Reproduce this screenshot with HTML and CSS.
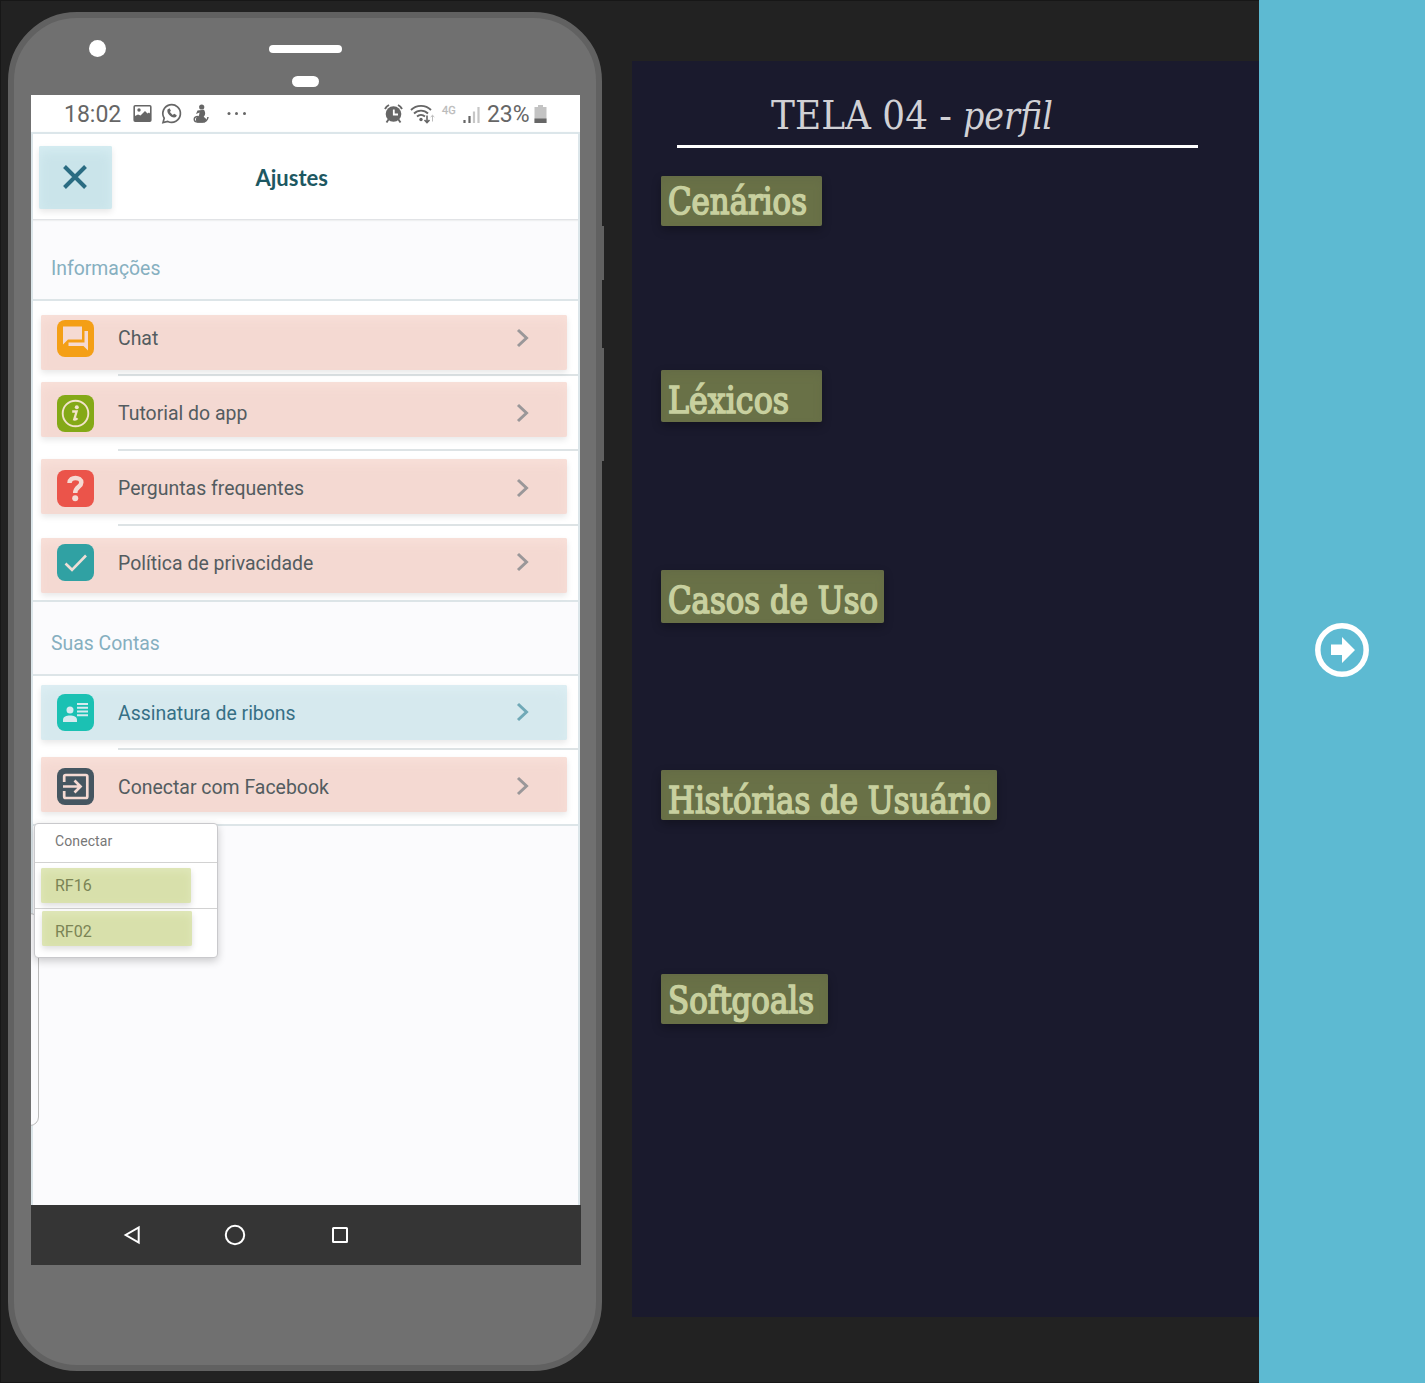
FILE: index.html
```html
<!DOCTYPE html>
<html lang="pt-BR">
<head>
<meta charset="utf-8">
<title>Tela 04 - perfil</title>
<link rel="stylesheet" href="styles.css">
</head>
<body>
<main class="board">
  <section class="phone">
    <i class="camera"></i><i class="speaker"></i><i class="sensor"></i>
    <i class="side-button power"></i><i class="side-button volume"></i>
    <div class="screen">
      <div class="status">
        <span class="clock">18:02</span>
        <svg class="status-left" width="120" height="24" viewBox="0 0 120 24" fill="none" stroke="#666">
          <rect x="1.2" y="3.700" width="16.6" height="15.6" rx="1" stroke-width="1.6"/>
          <path d="M2 19v-5l3-1.500 2.500 1 4.500-4.500 2.500 2.500 1.500-1 2 2V19z" fill="#666" stroke="none"/><circle cx="6" cy="8" r="1.700" fill="#666" stroke="none"/>
          <path d="M30 20.600l1.200-4.400a8.800 8.800 0 1 1 3.600 3.200z" stroke-width="1.700"/>
          <path d="M34.500 7.500c-1.200 4 4.500 9.500 8.500 7.500l.8-1.800-2.600-1.500-1.500 1.300-2.800-2.900 1-1.300-1.300-2.600z" fill="#666" stroke="none"/>
          <g fill="#666" stroke="none"><circle cx="68.700" cy="5" r="2.600"/><path d="M64.500 8.500l6.500-.8q2.500 4-.3 7l2.800 2.500-1.500 3.300h-8q-3-4.500 2-7l.5-3-3.500 1.500z"/></g>
          <path d="M65 14.500c-5 0-5 5.500 0 5.500h4.500c3 0 5-1.500 5.500-5" stroke-width="1.500"/>
          <g fill="#666" stroke="none"><circle cx="96" cy="11.500" r="1.500"/><circle cx="103.500" cy="11.500" r="1.500"/><circle cx="111.500" cy="11.500" r="1.500"/></g>
        </svg>
        <svg class="status-right" width="100" height="24" viewBox="0 0 100 24" fill="none" stroke="#666">
          <circle cx="9.500" cy="12" r="7.800" fill="#666" stroke="none"/><path d="M9.800 7.500v5h4.200" stroke="#fff" stroke-width="1.800"/>
          <path d="M1 7a9 9 0 0 1 4-4M14 3a9 9 0 0 1 4 4M4.500 17.500l-2 3M14.500 17.500l2 3" stroke-width="1.900"/>
          <path d="M27 8a14 14 0 0 1 20 0M30 11.500a10 10 0 0 1 14 0M33 14.500a6 6 0 0 1 8 0" stroke-width="1.800"/>
          <circle cx="37" cy="17.500" r="1.700" fill="#666" stroke="none"/>
          <path d="M43 13.500v7M40.500 18l2.500 2.500 2.500-2.500" stroke-width="1.600"/><path d="M48.500 19.500v-6M46.700 15l1.800-1.700 1.800 1.700" stroke="#bbb"/>
          <text class="network" x="58" y="12">4G</text>
          <path d="M80.500 18v3M85.500 14v7" stroke-width="2.200"/><path d="M90 9.500V21M94.500 5v16" stroke="#c6c6c6" stroke-width="2.200"/>
        </svg>
        <span class="charge">23%</span>
        <svg class="battery" width="14" height="20" viewBox="0 0 14 20"><path d="M4 1h5v2h3.500v16H.5V3H4z" fill="#c3c3c3"/><path d="M.5 14.500h12V19H.5z" fill="#666"/></svg>
      </div>
      <header class="topbar">
        <button class="close" aria-label="Fechar"><svg width="26" height="26" viewBox="0 0 26 26"><path d="M2.500 2.500l21 21M23.500 2.500l-21 21" stroke="#2a6c82" stroke-width="4"/></svg></button>
        <h1>Ajustes</h1>
      </header>
      <h2 class="group first">Informações</h2>
      <div class="rows">
        <div class="row chat"><svg class="icon" viewBox="0 0 37 37"><rect width="37" height="37" rx="8" fill="#f49f16"/><path d="M6 6.500h19v13H11l-5 5z" fill="#f5dad3"/><path d="M27.500 11H31v19.500L26.500 26H11.500v-3.500h16z" fill="#f5dad3"/></svg><span>Chat</span><svg class="chevron" viewBox="0 0 14 20"><path d="M2 2l8.500 8L2 18"/></svg></div>
        <div class="row tutorial"><svg class="icon" viewBox="0 0 37 37"><rect width="37" height="37" rx="8" fill="#84a917"/><circle cx="18.500" cy="18.500" r="12.800" fill="none" stroke="#f3e3cb" stroke-width="1.900"/><circle cx="19.800" cy="12.300" r="2" fill="#f3e3cb"/><path d="M15.200 16.500h4.400l-2.400 8q1.600.5 3.300-1.300" fill="none" stroke="#f3e3cb" stroke-width="2.300"/></svg><span>Tutorial do app</span><svg class="chevron" viewBox="0 0 14 20"><path d="M2 2l8.500 8L2 18"/></svg></div>
        <div class="row faq"><svg class="icon" viewBox="0 0 37 37"><rect width="37" height="37" rx="8" fill="#eb544a"/><path d="M12.500 13c.2-7 11.800-6.500 11.800-.5 0 4.500-6.100 4.200-6.100 10.500" fill="none" stroke="#f5dad3" stroke-width="4.500"/><circle cx="18.200" cy="28.300" r="3" fill="#f5dad3"/></svg><span>Perguntas frequentes</span><svg class="chevron" viewBox="0 0 14 20"><path d="M2 2l8.500 8L2 18"/></svg></div>
        <div class="row privacy"><svg class="icon" viewBox="0 0 37 37"><rect width="37" height="37" rx="8" fill="#30a1a3"/><path d="M8.500 19.500l6.500 6.300 14-14.300" fill="none" stroke="#eeded6" stroke-width="2.600"/></svg><span>Política de privacidade</span><svg class="chevron" viewBox="0 0 14 20"><path d="M2 2l8.500 8L2 18"/></svg></div>
      </div>
      <h2 class="group second">Suas Contas</h2>
      <div class="rows">
        <div class="row subscription"><svg class="icon" viewBox="0 0 37 37"><rect width="37" height="37" rx="8" fill="#1bc1b3"/><circle cx="13" cy="16" r="3.500" fill="#d7eaef"/><path d="M6 28v-2.500c0-5.500 14-5.500 14 0V28z" fill="#d7eaef"/><path d="M20 10h11M20 13.800h11M20 17.500h11M20 21.200h11" stroke="#d7eaef" stroke-width="2"/></svg><span>Assinatura de ribons</span><svg class="chevron" viewBox="0 0 14 20"><path d="M2 2l8.500 8L2 18"/></svg></div>
        <div class="row facebook"><svg class="icon" viewBox="0 0 37 37"><rect width="37" height="37" rx="8" fill="#455661"/><path d="M7.200 14V8.500q0-1.500 1.500-1.500h20.100q1.500 0 1.500 1.500v20q0 1.500-1.500 1.500H8.700q-1.500 0-1.500-1.500V23M6 18.500h17.500M17.500 12.500l6 6-6 6" fill="none" stroke="#f5dad3" stroke-width="2.700"/></svg><span>Conectar com Facebook</span><svg class="chevron" viewBox="0 0 14 20"><path d="M2 2l8.500 8L2 18"/></svg></div>
      </div>
      <i class="drawer-edge"></i>
      <div class="popup">
        <div class="popup-title">Conectar</div>
        <div class="popup-item"><a>RF16</a></div>
        <div class="popup-item last"><a>RF02</a></div>
      </div>
    </div>
    <nav class="navbar">
      <svg width="18" height="20" viewBox="0 0 18 20"><path d="M15.700 2.500v15L2.700 10z"/></svg>
      <svg width="22" height="22" viewBox="0 0 22 22"><circle cx="11" cy="11" r="9.200"/></svg>
      <svg width="18" height="18" viewBox="0 0 18 18"><rect x="2" y="2" width="14" height="14" rx=".5"/></svg>
    </nav>
  </section>
  <section class="panel">
    <svg class="title" width="521" height="58" viewBox="0 0 521 58"><text x="94" y="42" textLength="157" lengthAdjust="spacingAndGlyphs">TELA 04</text><text x="262" y="42" textLength="13" lengthAdjust="spacingAndGlyphs">-</text><text class="name" x="286" y="42" textLength="90" lengthAdjust="spacingAndGlyphs">perfil</text></svg>
    <hr>
    <div class="tag scenarios"><svg width="161" height="50"><text x="7" y="37.500" textLength="139" lengthAdjust="spacingAndGlyphs">Cenários</text></svg></div>
    <div class="tag lexicons"><svg width="161" height="52"><text x="7" y="43" textLength="121" lengthAdjust="spacingAndGlyphs">Léxicos</text></svg></div>
    <div class="tag cases"><svg width="223" height="53"><text x="7" y="43" textLength="210" lengthAdjust="spacingAndGlyphs">Casos de Uso</text></svg></div>
    <div class="tag stories"><svg width="336" height="50"><text x="7" y="43" textLength="323" lengthAdjust="spacingAndGlyphs">Histórias de Usuário</text></svg></div>
    <div class="tag softgoals"><svg width="167" height="50"><text x="7" y="39" textLength="146" lengthAdjust="spacingAndGlyphs">Softgoals</text></svg></div>
  </section>
  <aside class="next"><svg width="54" height="54" viewBox="0 0 54 54"><circle cx="27" cy="27" r="24.200" fill="none" stroke="#fff" stroke-width="5.500"/><path d="M16 21.500h11V14l13 13-13 13v-8H16z" fill="#fff"/></svg></aside>
</main>
</body>
</html>
```
FILE: styles.css
```css
* { box-sizing: border-box; }
body { margin: 0; background: #222; font-family: Roboto, sans-serif; }
svg { display: block; flex: none; overflow: visible; }
.board { display: flex; width: 1425px; height: 1383px; overflow: hidden; box-shadow: inset 1px 1px #171717, inset 0 -1px #171717; }

/* Phone body */
.phone { position: relative; flex: none; width: 594px; height: 1359px; margin: 11.500px 0 0 8px; padding: 77.500px 0 0 17px; border: 6px solid #616161; border-radius: 69px; background: #707070; }
.camera, .speaker, .sensor, .side-button { position: absolute; background: #fff; }
.camera { left: 75px; top: 22.500px; width: 17px; height: 17px; border-radius: 50%; }
.speaker { left: 255px; top: 27.500px; width: 73px; height: 8px; border-radius: 4px; }
.sensor { left: 278px; top: 58.500px; width: 27px; height: 11px; border-radius: 6px; }
.side-button { left: 588px; width: 2px; background: #616161; }
.power { top: 208.500px; height: 54px; }
.volume { top: 330.500px; height: 113px; }

.screen { position: relative; width: 549px; height: 1110px; background: #fbfbfd; overflow: hidden; }
.screen::after { content: ""; position: absolute; inset: 37px 0 0; border: solid #dce6ea; border-width: 2px 2px 0; pointer-events: none; }
.status { display: flex; align-items: center; height: 37px; padding-left: 33px; background: #fff; color: #666; font-size: 23px; line-height: 37px; }
.clock, .charge { padding-top: 2px; }
.clock { width: 58px; }
.status-left { margin-left: 11px; }
.status-right { margin-left: 131px; }
.charge { width: 43px; margin-left: 3px; letter-spacing: -.1px; }
.battery { margin-left: 4px; }
.network { fill: #bbb; stroke: #bbb; stroke-width: .3px; font-size: 11px; }
.topbar { display: flex; height: 87px; padding: 14px 0 0 8px; background: #fff; box-shadow: 0 1px 2px #d5d8da; position: relative; }
.close { display: grid; width: 73px; height: 63px; padding: 0; justify-content: center; align-content: center; border: 0; border-radius: 2px; background: #cae4ea; box-shadow: inset 0 5px 12px #d6edf2, 0 3px 6px #00000018; }
.close svg { margin: -2px 1px 0 0; }
h1 { margin: 18px 0 0 143.500px; color: #1d5862; font: bold 22px/28px Lato, sans-serif; }
.group { display: flex; align-items: center; margin: 0; padding-left: 20px; color: #86afc0; font-size: 19.400px; font-weight: 400; }
.first { height: 80px; padding-top: 18px; }
.second { height: 72px; padding-top: 11px; }
.rows { background: #fff; border: solid #dde5e8; border-width: 2px 0; }
.row { position: relative; display: flex; z-index: 0; align-items: center; height: 75px; padding: 0 50px 0 25.500px; color: #535c60; font-size: 19.450px; }
.rows .row:last-child { height: 74px; }
.row::before { content: ""; position: absolute; z-index: -1; left: 10px; top: var(--mark-top); width: 526px; height: 55px; border-radius: 2px; background: #f4d9d2; box-shadow: inset 0 6px 12px -2px #f9e1da, 0 3px 6px #00000018; }
.row:not(:last-child)::after { content: ""; position: absolute; z-index: -2; left: 87px; right: 0; bottom: 0; height: 2px; background: #dde3e5; }
.chat { --mark-top: 14px; }
.tutorial { --mark-top: 6px; }
.faq { --mark-top: 8px; }
.privacy { --mark-top: 12px; }
.subscription { --mark-top: 9px; color: #367086; }
.row.subscription { height: 74px; }
.facebook { --mark-top: 7px; }
.subscription::before { background: #d6e9ee; box-shadow: inset 0 6px 12px -2px #deeff4, 0 3px 6px #00000018; }
.icon { width: 37px; height: 37px; margin-right: 24.500px; margin-top: -1px; }
.chevron { width: 14px; height: 20px; margin-left: auto; margin-right: 0; margin-top: -2px; fill: none; stroke: #9a9799; stroke-width: 3; }
.subscription .chevron { stroke: #70a9b7; }

.drawer-edge { position: absolute; z-index: 1; left: -10px; top: 818px; width: 18px; height: 213px; border: 1px solid #bbb; border-radius: 9px; background: #fbfbfd; }
.popup { position: absolute; z-index: 2; left: 3px; top: 728px; width: 184px; height: 135px; border: 1px solid #c9c9cc; border-radius: 4px; background: #fff; box-shadow: 0 3px 8px #0003; }
.popup-title { height: 39px; padding: 8px 20px; border-bottom: 1px solid #d2d2d2; color: #777; font-size: 14px; line-height: 18px; letter-spacing: .1px; }
.popup-item { height: 46px; padding: 5px 6px; border-bottom: 1px solid #d2d2d2; }
.popup-item a { display: block; width: 150px; height: 35px; padding-left: 14px; border-radius: 2px; background: #d8e0ab; box-shadow: inset 0 3px 9px #e0e8bb, 0 3px 6px #0002; color: #7b8455; font-size: 16px; line-height: 35px; }
.popup-item.last { padding: 2px 7px; border: 0; }
.last a { padding-left: 13px; line-height: 41px; }
.navbar { display: flex; align-items: center; width: 550px; height: 59.500px; padding-left: 92px; background: #353535; fill: none; stroke: #fff; stroke-width: 2; }
.navbar svg + svg { margin-left: 83px; }
.navbar svg:last-child { margin-left: 85px; }

/* Requirement links */
.panel { flex: none; width: 627px; height: 1256px; margin: 61px 0 0 30px; padding: 26px 0 0 29px; background: #1a1a2d; }
.panel text { font-family: "DejaVu Serif", serif; font-size: 37px; }
.title { margin-left: 16px; fill: #d1d1d5; }
.panel .title text { font-size: 39px; }
.title .name { font-style: italic; }
hr { width: 521px; height: 3px; margin: 0 0 0 16px; border: 0; background: #fff; }
.tag { width: fit-content; border-radius: 2px; background: #697147; box-shadow: inset 0 5px 10px -2px #646b46, 0 4px 10px #0004; fill: #c8d09f; stroke: #c8d09f; stroke-width: 1.7px; }
.scenarios { margin-top: 28px; }
.lexicons { margin-top: 144px; }
.cases { margin-top: 148px; }
.stories { margin-top: 147px; }
.softgoals { margin-top: 154px; }
.next { display: flex; flex: none; width: 166px; height: 1383px; padding: 623px 0 0 56px; background: #5dbad2; }
```
